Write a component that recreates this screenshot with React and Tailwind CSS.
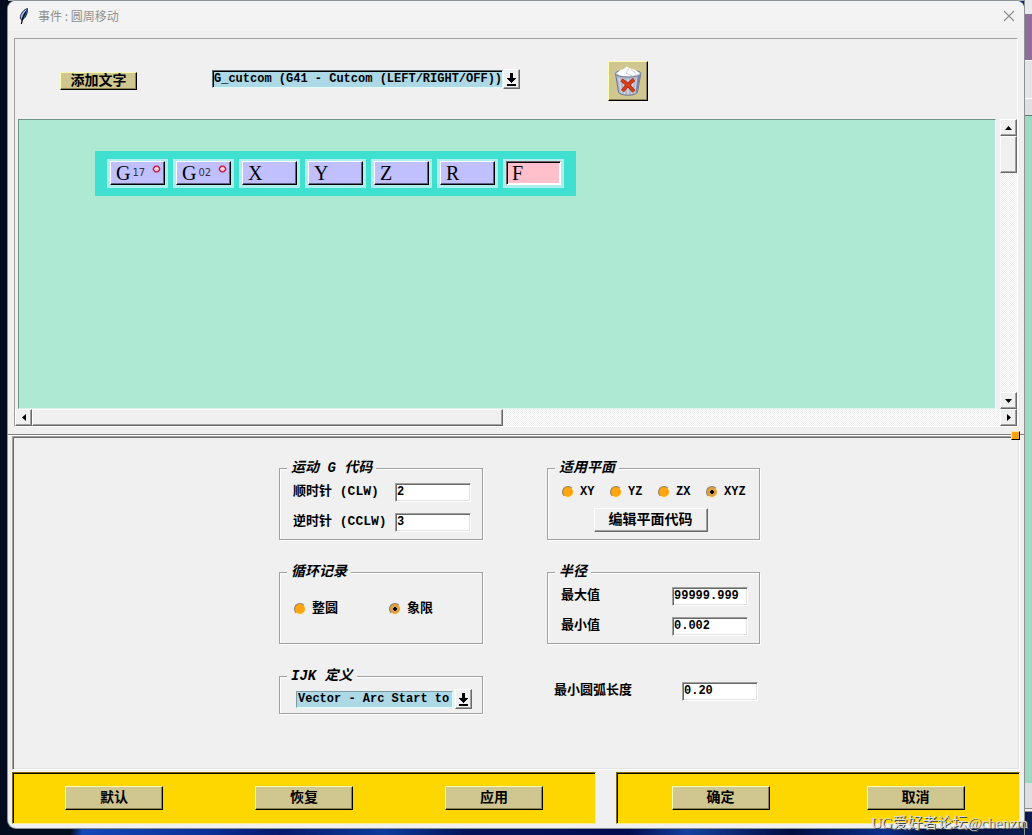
import React from "react";

const MONO = "font-['Liberation_Mono','Noto_Sans_CJK_SC',monospace] font-bold";

const RAISED =
  "border border-t-white border-l-white border-b-[#696969] border-r-[#696969] bg-[#f0f0f0] shadow-[inset_-1px_-1px_0_#a0a0a0]";
const KHAKI =
  "border border-t-[#ffffb4] border-l-[#ffffb4] border-b-black border-r-black bg-[#d0c790] shadow-[inset_-1px_-1px_0_#8b8152]";
const ENTRY =
  "h-[19px] w-[76px] border border-t-[#a0a0a0] border-l-[#a0a0a0] border-b-white border-r-white bg-white pl-px text-xs leading-4 text-black shadow-[inset_1px_1px_0_#696969,inset_-1px_-1px_0_#e3e3e3] outline-none";
const TROUGH =
  "bg-[repeating-conic-gradient(#ffffff_0_25%,#eeeeee_0_50%)] bg-[length:2px_2px]";

function Feather() {
  return (
    <svg width="12" height="18" viewBox="0 0 12 18" aria-hidden="true">
      <path d="M9.500 1.500C6 2.500 2.500 6 2.200 11.500L3.800 13C7.500 11.500 9.800 6.500 9.500 1.500Z" fill="#6f93cc" stroke="#26334f" strokeWidth="1" />
      <path d="M9.200 2C9.500 6 7.500 10.500 4 13L3.400 12.600C5 9 7 5.500 9.200 2Z" fill="#2a4a86" />
      <path d="M8 4.500C5.500 8 4.200 11 3.400 17" fill="none" stroke="#05080f" strokeWidth="1.200" />
      <path d="M7.500 3.500C5 5.500 3.800 8 3.400 10.500" fill="none" stroke="#b9cdec" strokeWidth="1" />
    </svg>
  );
}

function Trash() {
  return (
    <svg width="28" height="32" viewBox="0 0 28 32" aria-hidden="true">
      <path d="M1.500 8.500L4.500 27Q6 30.200 14 30.200Q22 30.200 23.500 27L26.800 8.500Z" fill="#b4bacb" stroke="#6a738f" strokeWidth="1" />
      <path d="M5 13L7.500 28M9.500 14L10.500 29M14 14V29.500M19 14L18 29M23 13L21 28" stroke="#d2d6e3" strokeWidth="1.400" />
      <path d="M23.500 12L21.500 28.500L23.300 27L26.300 10Z" fill="#7b86a5" />
      <ellipse cx="14.200" cy="8.500" rx="12.800" ry="3.600" fill="#d3d8e6" stroke="#727b97" strokeWidth="1" />
      <path d="M3 8.500L6 5L10 4L12.500 1.500L15.500 3L18 4L22 5L25 8.500L18 11H8Z" fill="#ffffff" />
      <path d="M15 3.500L12 8L18 11M17 4.500L22 8.500" fill="none" stroke="#b4bbcd" strokeWidth=".8" />
      <path d="M7.500 15Q14 19 20 26.500M20 14.500Q13 19.500 8.500 26" fill="none" stroke="#9a2a14" strokeWidth="3.800" />
      <path d="M7.500 15Q14 19 20 26.500M20 14.500Q13 19.500 8.500 26" fill="none" stroke="#dd3a18" strokeWidth="2.600" />
    </svg>
  );
}

function DropButton({ label }) {
  return (
    <button type="button" aria-label={label} className={`flex h-5 w-[17px] shrink-0 items-center justify-center ${RAISED}`}>
      <svg width="9" height="13" viewBox="0 0 9 13" shapeRendering="crispEdges" aria-hidden="true">
        <path d="M3 0H6V5H9V6H8V7H7V8H6V9H5V10H4V9H3V8H2V7H1V6H0V5H3ZM0 11H9V13H0Z" fill="#000" />
      </svg>
    </button>
  );
}

const ARROWS = {
  up: "M3.500 0L7 4H0Z",
  down: "M0 0H7L3.500 4Z",
  left: "M4 0V7L0 3.500Z",
  right: "M0 0L4 3.500L0 7Z",
};

function ScrollButton({ dir, label }) {
  const tall = dir === "left" || dir === "right";
  return (
    <button type="button" aria-label={label} className={`flex h-[17px] w-[17px] shrink-0 items-center justify-center ${RAISED}`}>
      <svg width={tall ? 4 : 7} height={tall ? 7 : 4} aria-hidden="true">
        <path d={ARROWS[dir]} fill="#000" />
      </svg>
    </button>
  );
}

const WORDS = [
  { letter: "G", num: "17", mark: true },
  { letter: "G", num: "02", mark: true },
  { letter: "X" },
  { letter: "Y" },
  { letter: "Z" },
  { letter: "R" },
  { letter: "F", sunken: true },
];

function Word({ letter, num, mark, sunken }) {
  const look = sunken
    ? "border-t-[#7f6065] border-l-[#7f6065] border-b-white border-r-white bg-[#ffc0cb] shadow-[inset_1px_1px_0_#000,inset_-1px_-1px_0_#ffffff]"
    : "border-t-white border-l-white border-b-black border-r-black bg-[#c0c0ff] shadow-[inset_-1px_-1px_0_#606080]";
  return (
    <div className="flex h-[29px] w-[61px] items-start bg-[#afeeee] px-[3px] pt-0.5">
      <button type="button" className={`flex h-6 w-full items-center gap-0.5 border pl-[5px] font-normal text-black ${look}`}>
        <span className="font-['Liberation_Serif',serif] text-xl leading-5">{letter}</span>
        {num && <span className="font-['DejaVu_Sans',sans-serif] text-[10px] leading-5 text-[#333344]">{num}</span>}
        {mark && (
          <svg width="9" height="9" viewBox="0 0 9 9" className="ml-auto mr-[3px] mt-[3px] shrink-0 self-start" aria-hidden="true">
            <path d="M3.200 1.200H5.800L7.600 3.200V4.800L5.800 6.800H3.200L1.400 4.800V3.200Z" fill="#ffd0dc" stroke="#c8143c" strokeWidth="1.300" />
          </svg>
        )}
      </button>
    </div>
  );
}

function Group({ title, className, children }) {
  return (
    <fieldset className={`min-w-0 border border-[#a0a0a0] shadow-[1px_1px_0_#fff,inset_1px_1px_0_#fff] ${className}`}>
      <legend className="ml-[7px] bg-[#f0f0f0] px-1 text-sm leading-4 italic">{title}</legend>
      <div className="pt-px">{children}</div>
    </fieldset>
  );
}

function Field({ id, label, value, pad }) {
  return (
    <div className={`flex h-[30px] items-center justify-between pr-[11px] ${pad}`}>
      <label htmlFor={id} className="text-[13px] leading-4 whitespace-pre">{label}</label>
      <input id={id} defaultValue={value} className={ENTRY} />
    </div>
  );
}

function Radio({ name, label, checked, size }) {
  return (
    <label className={`flex items-center gap-1.5 leading-4 ${size}`}>
      <input
        type="radio"
        name={name}
        defaultChecked={checked}
        className="h-3 w-3 shrink-0 appearance-none rounded-full border border-t-[#8a7f6c] border-l-[#8a7f6c] border-b-[#fff3cf] border-r-[#fff3cf] bg-[#ffa511] checked:bg-[#dfa040] checked:bg-[radial-gradient(circle,#000_0_2px,#dfa040_2px)]"
      />
      {label}
    </label>
  );
}

function BarButton({ children }) {
  return (
    <div className="flex flex-1 justify-center">
      <button type="button" className={`h-6 w-[98px] text-sm leading-4 text-black ${KHAKI}`}>{children}</button>
    </div>
  );
}

const BAR =
  "flex h-[52px] items-center border border-t-[#7f6b00] border-l-[#7f6b00] border-b-[#fff08a] border-r-[#fff08a] bg-[#ffd700] px-1.5 shadow-[inset_1px_1px_0_#000]";

export default function App() {
  return (
    <div className={`relative flex min-h-screen bg-[#020c1e] text-black ${MONO}`}>
      <div className="w-2 shrink-0 bg-[#020c1e]" />

      <div className="flex min-w-0 flex-1 flex-col bg-[linear-gradient(100deg,#020c1e_0,#030d20_18%,#1248b8_19%,#0a2f96_30%,#06196c_36%,#0b3c9c_45%,#04145a_52%,#020c50_66%,#1440a0_71%,#020c40_80%,#0a2f8c_88%,#02103a_92%,#0a1c50_100%)]">
        <div className="h-px shrink-0 bg-[#a9a9a9]" />
        <main className="mb-[7px] flex flex-1 flex-col overflow-hidden rounded-lg bg-[#f0f0f0] pb-1 shadow-[0_0_0_1px_#8d9296]">
          <header className="flex h-[30px] shrink-0 items-center bg-[#f3f3f3] pl-2.5 pr-[9px]">
            <Feather />
            <h1 className="ml-2 flex-1 font-['Noto_Sans_CJK_SC',sans-serif] text-xs font-normal leading-4 text-[#8f8f8f]">事件 : 圆周移动</h1>
            <button type="button" aria-label="关闭" className="flex h-3 w-3 items-center justify-center">
              <svg width="12" height="12" viewBox="0 0 12 12" aria-hidden="true">
                <path d="M1 1L11 11M11 1L1 11" stroke="#8c8c8c" strokeWidth="1.100" />
              </svg>
            </button>
          </header>

          <section className="mx-1.5 mt-[7px] border border-t-[#a0a0a0] border-l-[#a0a0a0] border-b-white border-r-white">
            <div className="flex h-20 items-center pl-[45px] pt-1">
              <button type="button" className={`h-[18px] w-[77px] text-sm leading-4 ${KHAKI}`}>添加文字</button>
              <div className="mb-1 ml-[75px] flex items-center">
                <input
                  aria-label="G_cutcom"
                  readOnly
                  value="G_cutcom (G41 - Cutcom (LEFT/RIGHT/OFF))"
                  className="h-[18px] w-[291px] border border-t-[#5a7077] border-l-[#5a7077] border-b-[#e0ffff] border-r-[#e0ffff] bg-[#add8e6] pl-px text-xs leading-4 shadow-[inset_1px_1px_0_#000] outline-none"
                />
                <DropButton label="选择文字" />
              </div>
              <button type="button" aria-label="删除" className={`ml-[88px] flex h-10 w-10 items-center justify-center ${KHAKI}`}>
                <Trash />
              </button>
            </div>

            <div className="flex h-[290px]">
              <div className="ml-[3px] min-w-0 flex-1 border border-t-[#6e9484] border-l-[#6e9484] border-b-[#d9f3e9] border-r-white bg-[#aeead3] pl-[76px] pt-[31px]">
                <div className="flex w-max gap-[5px] bg-[#40e0d0] px-3 py-2">
                  {WORDS.map((w, i) => (
                    <Word key={i} {...w} />
                  ))}
                </div>
              </div>
              <div className={`ml-1 flex w-[17px] flex-col ${TROUGH}`}>
                <ScrollButton dir="up" label="向上" />
                <div className={`h-[37px] ${RAISED}`} />
                <div className="flex-1" />
                <ScrollButton dir="down" label="向下" />
              </div>
            </div>
            <div className={`flex h-[17px] ${TROUGH}`}>
              <ScrollButton dir="left" label="向左" />
              <div className={`w-[47%] ${RAISED}`} />
              <div className="flex-1" />
              <ScrollButton dir="right" label="向右" />
            </div>
          </section>

          <div className="relative mt-[7px] h-0.5 shrink-0 border-b border-t border-b-white border-t-[#808080]">
            <div className="absolute -top-1 right-1 h-[9px] w-[9px] border border-t-[#ffe0a0] border-l-[#ffe0a0] border-b-black border-r-black bg-[#f8a510]" />
          </div>

          <section className="mx-1 flex-1 border border-t-[#a0a0a0] border-l-[#a0a0a0] border-b-white border-r-white pt-[23px] shadow-[inset_1px_1px_0_#696969,inset_-1px_-1px_0_#e3e3e3]">
            <div className="grid grid-cols-[204px_213px] justify-center gap-x-16 gap-y-6 pl-[7px]">
              <Group title="运动 G 代码" className="h-20">
                <Field id="clw" label="顺时针 (CLW)" value="2" pad="pl-[13px]" />
                <Field id="cclw" label="逆时针 (CCLW)" value="3" pad="pl-[13px]" />
              </Group>

              <Group title="适用平面" className="h-20">
                <div className="flex h-[30px] items-center pl-3.5">
                  <Radio name="plane" label="XY" size="w-12 text-xs" />
                  <Radio name="plane" label="YZ" size="w-12 text-xs" />
                  <Radio name="plane" label="ZX" size="w-12 text-xs" />
                  <Radio name="plane" label="XYZ" size="w-12 text-xs" checked />
                </div>
                <div className="flex justify-center pr-1.5 pt-px">
                  <button type="button" className={`h-6 w-[114px] text-sm leading-4 ${RAISED}`}>编辑平面代码</button>
                </div>
              </Group>

              <Group title="循环记录" className="h-20">
                <div className="flex h-14 items-center pl-3.5">
                  <Radio name="record" label="整圆" size="w-[95px] text-[13px]" />
                  <Radio name="record" label="象限" size="text-[13px]" checked />
                </div>
              </Group>

              <Group title="半径" className="h-20">
                <Field id="max" label="最大值" value="99999.999" pad="pl-[13px]" />
                <Field id="min" label="最小值" value="0.002" pad="pl-[13px]" />
              </Group>

              <Group title="IJK 定义" className="h-[46px]">
                <div className="flex h-7 items-center gap-0.5 pl-4">
                  <input
                    aria-label="IJK 定义"
                    readOnly
                    value="Vector - Arc Start to"
                    className="h-[17px] w-[157px] border border-t-[#7f9ba3] border-l-[#7f9ba3] border-b-[#e0ffff] border-r-[#e0ffff] bg-[#add8e6] pl-px text-xs leading-4 outline-none"
                  />
                  <DropButton label="选择定义" />
                </div>
              </Group>

              <div className="flex items-center justify-between pl-[7px] pr-0.5">
                <label htmlFor="arc" className="text-[13px] leading-4">最小圆弧长度</label>
                <input id="arc" defaultValue="0.20" className={ENTRY} />
              </div>
            </div>
          </section>

          <footer className="mx-1 mt-0.5 flex gap-5">
            <div className={`flex-[570_1_0%] ${BAR}`}>
              <BarButton>默认</BarButton>
              <BarButton>恢复</BarButton>
              <BarButton>应用</BarButton>
            </div>
            <div className={`flex-[390_1_0%] ${BAR}`}>
              <BarButton>确定</BarButton>
              <BarButton>取消</BarButton>
            </div>
          </footer>
        </main>
      </div>

      <div className="flex w-2 shrink-0 flex-col border-l border-[#8d9296] bg-[#0a1c50] pb-[23px]" aria-hidden="true">
        <div className="h-3.5 bg-[#e9e9e9]" />
        <div className="h-[46px] bg-[#8f6f9a]" />
        <div className="h-[39px] border-b border-t border-white bg-[#e4e4e4]" />
        <div className="h-4 bg-[#e0e0e0]" />
        <div className="flex-1 border-t border-[#5c7f72] bg-[#9fd9c2]" />
        <div className="h-[25px] bg-[#dedede]" />
        <div className="h-1 border-y border-[#8a8a8a] bg-[#efefef]" />
      </div>

      <p className="absolute bottom-0.5 right-1 font-['Liberation_Serif','Noto_Sans_CJK_SC',serif] text-[15px] font-normal leading-5 text-[#dcdcdc] [text-shadow:1px_1px_0_#4a4a4a]">UG爱好者论坛@chenzm</p>
    </div>
  );
}
